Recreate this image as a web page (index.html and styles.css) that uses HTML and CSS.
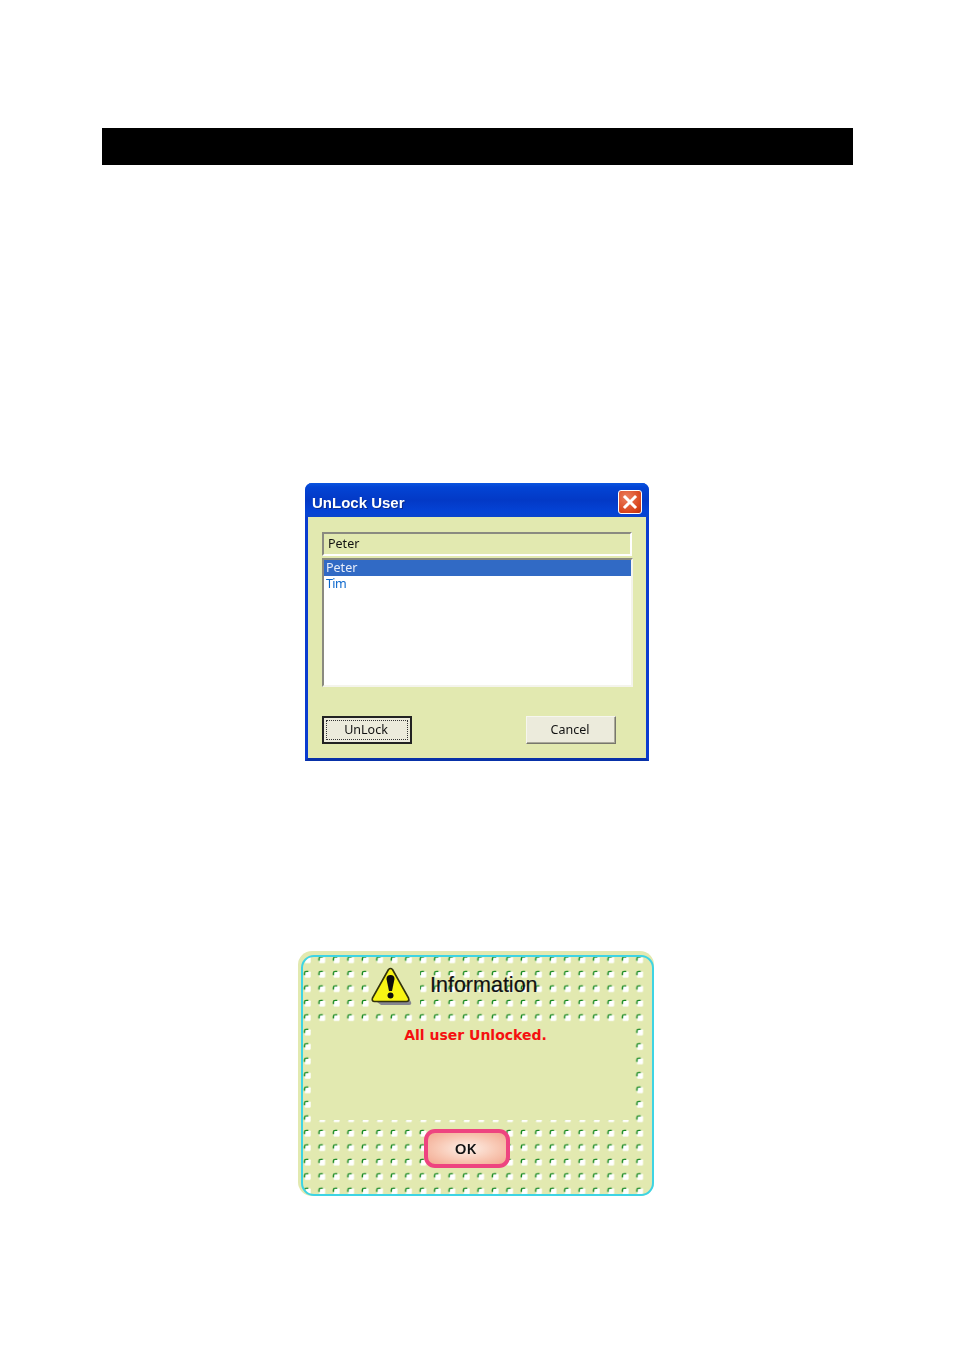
FILE: index.html
```html
<!DOCTYPE html>
<html lang="en">
<head>
<meta charset="utf-8">
<title>UnLock User</title>
<link rel="stylesheet" href="styles.css">
</head>
<body>
<div class="bar"></div>

<section class="win">
  <header class="win-title">
    <span class="win-title-text">UnLock User</span>
    <span class="win-close">
      <svg width="24" height="24" viewBox="0 0 24 24"><path d="M7 7L17 17M17 7L7 17" stroke="#fff" stroke-width="3" stroke-linecap="square" fill="none"/></svg>
    </span>
  </header>
  <div class="win-body">
    <div class="field">Peter</div>
    <ul class="list">
      <li class="list-item selected">Peter</li>
      <li class="list-item list-item-tim">Tim</li>
    </ul>
    <div class="win-actions">
      <button class="btn btn-default"><span class="btn-focus">UnLock</span></button>
      <button class="btn">Cancel</button>
    </div>
  </div>
</section>

<section class="info">
  <div class="info-frame">
    <svg class="dots" width="346" height="237">
      <defs>
        <pattern id="dot" patternUnits="userSpaceOnUse" x="-2.6" y="-4.2" width="14.45" height="14.45">
          <rect x="4.300" y="4.300" width="6" height="6" rx="0.8" fill="#fff"/>
          <path d="M4.200 8V5.800Q4.200 4.200 5.800 4.200H8" stroke="#13861f" stroke-width="1.4" fill="none"/>
        </pattern>
      </defs>
      <rect width="346" height="237" fill="url(#dot)"/>
    </svg>
    <div class="info-head">
      <span class="info-icon">
        <svg width="42" height="40" viewBox="0 0 42 40">
          <path d="M22 6L40 35Q41 38 38 38H10L6 35Z" fill="#85858f"/>
          <path d="M17.500 2.500Q19.500 0.500 21.500 2.500L37.500 31Q38.500 34.500 35.500 34.500H3.500Q0.500 34.500 1.500 31Z" fill="#f8f414" stroke="#33330c" stroke-width="1.600" stroke-linejoin="round"/>
          <path d="M15.500 12Q15.500 8 19.500 8Q23.500 8 23.500 12L21 24H18Z" fill="#0c0c0c"/>
          <circle cx="19.500" cy="28.500" r="3" fill="#0c0c0c"/>
        </svg>
      </span>
      <h2 class="info-title">Information</h2>
    </div>
    <div class="info-panel">All user Unlocked.</div>
    <div class="info-foot">
      <button class="ok">OK</button>
    </div>
  </div>
</section>
</body>
</html>
```
FILE: styles.css
```css
* { box-sizing: border-box; }
html, body { margin: 0; padding: 0; background: #fff; }
body { width: 954px; height: 1350px; overflow: hidden; font-family: "Noto Sans", "Liberation Sans", sans-serif; }

.bar { margin: 128px 0 0 102px; width: 751px; height: 37px; background: #000; }

.win {
  margin: 318px 0 0 305px;
  width: 344px;
  height: 278px;
  display: flex;
  flex-direction: column;
  background: #0a3fd0;
  border-radius: 7px 7px 0 0;
  border: 3px solid #0a3ccf;
  border-top: 0;
  border-bottom-color: #0831a8;
  filter: blur(0.35px);
}
.win-title {
  height: 34px;
  margin: 0 -3px;
  padding: 7px 7px 0 7px;
  display: flex;
  align-items: flex-start;
  justify-content: space-between;
  border-radius: 7px 7px 0 0;
  background: linear-gradient(#0a55e0 0, #0344d4 12%, #0339c6 50%, #0443d6 85%, #0a44cc 100%);
}
.win-title-text { color: #fff; margin-top: 3px; font: bold 15px/20px "Liberation Sans", sans-serif; text-shadow: 1px 1px 0 #0a2c90; }
.win-close {
  width: 24px;
  height: 24px;
  display: block;
  border: 1px solid #fff;
  border-radius: 3px;
  background: radial-gradient(circle at 35% 30%, #ec8060, #d8441c 70%, #b83010);
}
.win-close svg { display: block; margin: -1px; }
.win-body { flex: 1; padding: 15px 15px 0 14px; background: #e2e9b0; display: flex; flex-direction: column; }
.field {
  height: 24px;
  width: 310px;
  padding: 0 0 0 4px;
  line-height: 19px;
  font-size: 12.500px;
  color: #111;
  background: #e2e9b0;
  border: 2px solid;
  border-color: #8a8a80 #fff #fff #8a8a80;
}
.list {
  list-style: none;
  margin: 2px 0 0;
  padding: 0;
  width: 311px;
  height: 129px;
  background: #fff;
  border: 2px solid;
  border-color: #8a8a80 #f4f4ec #f4f4ec #8a8a80;
}
.list-item { height: 16px; padding-left: 2px; line-height: 16px; font-size: 12.500px; color: #0a66cc; }
.list-item-tim { letter-spacing: -0.6px; }
.list-item.selected { background: #316ac5; color: #e8eefa; }
.win-actions { margin-top: 29px; width: 294px; display: flex; justify-content: space-between; }
.btn {
  width: 90px;
  height: 28px;
  padding: 0 2px 2px 0;
  font: 12.500px "Noto Sans", "Liberation Sans", sans-serif;
  color: #111;
  background: #ecebdc;
  border: 1px solid;
  border-color: #f6f6ee #77776c #77776c #f6f6ee;
  box-shadow: inset -1px -1px 0 #aaa99a;
}
.btn-default { border: 2px solid #222; box-shadow: none; display: flex; padding: 2px; }
.btn-focus { flex: 1; line-height: 18px; border: 1px dotted #333; padding-right: 2px; }

.info {
  margin: 190px 0 0 298px;
  width: 356px;
  height: 245px;
  padding: 4px 0 0 3px;
  background: #e2e9b0;
  border-radius: 14px;
  filter: blur(0.25px);
}
.info-frame {
  position: relative;
  height: 241px;
  overflow: hidden;
  border: 2px solid #3ed4e4;
  border-radius: 13px;
  display: flex;
  flex-direction: column;
}
.dots { position: absolute; left: 0; top: 0; }
.info-head { position: relative; height: 66px; display: flex; align-items: flex-start; padding: 10px 0 0 67px; }
.info-icon { width: 50px; height: 41px; background: #e2e9b0; padding-left: 1px; }
.info-icon svg { display: block; }
.info-title { margin: 3px 0 0 10px; font: 500 21.500px/30px "Liberation Sans", sans-serif; color: #111; -webkit-text-stroke: 0.2px #111; }
.info-panel {
  position: relative;
  margin: 0 17px 0 10px;
  height: 97px;
  background: #e2e9b0;
  text-align: center;
  padding: 2px 0 0 3px;
  font: bold 14px/20px "DejaVu Sans", sans-serif;
  color: #f51010;
}
.info-foot { position: relative; padding: 9px 0 0 121px; }
.ok {
  display: block;
  width: 86px;
  height: 39px;
  padding: 0 3px 2px 0;
  font: 600 15px "Noto Sans", "Liberation Sans", sans-serif;
  color: #111;
  border: 4px solid #ee4480;
  border-radius: 11px;
  background: radial-gradient(ellipse at center, #fdf0e8 0, #f8c8b4 55%, #f2a890 100%);
}
```
